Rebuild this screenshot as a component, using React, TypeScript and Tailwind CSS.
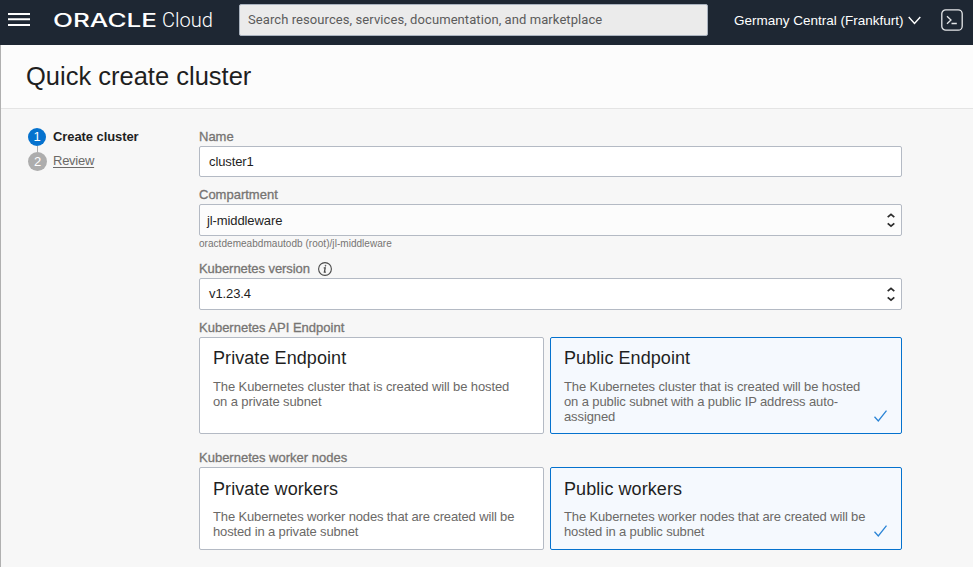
import type { ReactNode } from "react";

function FieldLabel({ children, className = "" }: { children: ReactNode; className?: string }) {
  return (
    <div
      className={`flex items-center text-[13px] leading-[18px] text-[#767472] [-webkit-text-stroke:0.3px_#767472] ${className}`}
    >
      {children}
    </div>
  );
}

function Stepper() {
  return (
    <svg className="h-[17px] w-[8px] shrink-0" viewBox="0 0 8 17" fill="none" stroke="#2b2b2b" strokeWidth="1.7">
      <path d="M0.7 5.2 4 2.3l3.3 2.9M0.7 11.3 4 14.2l3.3-2.9" />
    </svg>
  );
}

interface ChoiceProps {
  title: string;
  lines: string[];
  selected?: boolean;
  compact?: boolean;
}

function Choice({ title, lines, selected = false, compact = false }: ChoiceProps) {
  return (
    <div
      className={`flex rounded-[2px] border pl-[13px] ${compact ? "pt-[9px]" : "pt-[8px]"} ${
        selected ? "border-[#0572ce] bg-[#f5f9fe]" : "border-[#b4bac4] bg-white"
      }`}
    >
      <div className="grow">
        <h3 className="text-[18px] leading-6 tracking-[0.07px] text-[#1f1f1f]">{title}</h3>
        <p
          className={`text-[13px] leading-[15px] whitespace-nowrap text-[#6b6967] ${
            compact ? "mt-[8px] tracking-[-0.14px]" : "mt-[9px] tracking-[-0.11px]"
          }`}
        >
          {lines.map((line) => (
            <span key={line} className="block">
              {line}
            </span>
          ))}
        </p>
      </div>
      {selected && (
        <svg
          className={`mr-[14px] h-3 w-[13px] shrink-0 self-end ${compact ? "mb-[12px]" : "mb-[11px]"}`}
          viewBox="0 0 13 12"
          fill="none"
          stroke="#2a84d6"
          strokeWidth="1.3"
        >
          <path d="M0.5 6.8 4.3 10.9 12.5 0.7" />
        </svg>
      )}
    </div>
  );
}

export default function App() {
  return (
    <div className="flex h-[567px] w-[973px] flex-col overflow-hidden bg-[#f7f7f7] font-['Liberation_Sans',Arial,sans-serif]">
      <header className="flex h-[45px] shrink-0 bg-[#1e2733] text-white">
        <svg className="mt-3 ml-2 h-[15px] w-[22px]" viewBox="0 0 22 15" fill="#fff">
          <path d="M0 1h22v2H0zM0 6.2h22v2H0zM0 11.9h22v2H0z" />
        </svg>
        <svg className="ml-[23px] h-[45px] w-[162px]" viewBox="0 0 162 45" fill="#fff">
          <text x="0" y="27" fontSize="18" fontFamily="Inter, sans-serif" fontWeight="500" textLength="104" lengthAdjust="spacingAndGlyphs">
            ORACLE
          </text>
          <text x="109" y="27" fontSize="19.5" fontFamily="Roboto, sans-serif" fontWeight="300" textLength="51" lengthAdjust="spacingAndGlyphs">
            Cloud
          </text>
        </svg>
        <div className="mt-1 ml-6 flex h-8 w-[469px] items-center rounded-[2px] border border-[#aab3bf] bg-[#ebebeb] pl-[8px] font-['Roboto',sans-serif] text-[13px] tracking-[0.08px] text-[#5b5b5b]">
          Search resources, services, documentation, and marketplace
        </div>
        <div className="mt-[12px] ml-[26px] h-[18px] w-[171px] text-[13.5px] leading-[18px] whitespace-nowrap">
          Germany Central (Frankfurt)
        </div>
        <svg className="mt-[15px] ml-[3px] h-[11px] w-[13px]" viewBox="0 0 13 11" fill="none" stroke="#fff" strokeWidth="1.4">
          <path d="M0.7 2 6.5 8.5 12.3 2" />
        </svg>
        <svg className="mt-[9px] ml-[20px] h-[22px] w-[22px]" viewBox="0 0 22 22" fill="none" stroke="#e6e8ea" strokeWidth="1.3">
          <rect x="0.8" y="0.8" width="20.4" height="20.4" rx="4" />
          <path d="M6 7.2 10 11 6 14.8M10.5 14.5h5.3" />
        </svg>
      </header>

      <div className="flex grow flex-col border-l border-[#b0b0b0]">
        <div className="flex h-16 shrink-0 items-center border-b border-[#e4e4e4] bg-[#fcfcfc] pb-[2px] pl-[25px]">
          <h1 className="text-[25.5px] leading-8 text-[#1f1f1f]">Quick create cluster</h1>
        </div>

        <div className="flex grow">
          <nav className="w-[198px] shrink-0 pt-[19px] pl-[27px] text-[13px]">
            <div className="flex h-[18px] items-center">
              <span className="flex size-[18px] items-center justify-center rounded-full bg-[#0572ce] text-white">1</span>
              <span className="ml-[7px] font-bold tracking-[-0.08px] text-[#1f1f1f]">Create cluster</span>
            </div>
            <div className="ml-[9px] h-[6px] w-px bg-[#adadad]" />
            <div className="flex h-[19px] items-center">
              <span className="flex size-[19px] items-center justify-center rounded-full bg-[#adadad] text-white">2</span>
              <span className="mb-px ml-[6px] tracking-[-0.25px] text-[#6b6967] underline underline-offset-2">Review</span>
            </div>
          </nav>

          <main className="flex w-[703px] flex-col">
            <FieldLabel className="mt-[19px]">Name</FieldLabel>
            <div className="flex h-[31px] items-center rounded-[2px] border border-[#b4bac4] bg-white pl-[9px] text-[13px] tracking-[-0.1px] text-[#1f1f1f]">
              cluster1
            </div>

            <FieldLabel className="mt-[9px]">Compartment</FieldLabel>
            <div className="flex h-8 items-center justify-between rounded-[2px] border border-[#b4bac4] bg-[#fcfcfc] pr-[6px] pl-[7px] text-[13px] tracking-[-0.1px] text-[#1f1f1f]">
              <span className="mt-[2px]">jl-middleware</span>
              <Stepper />
            </div>
            <div className="mt-[2px] h-3 text-[10px] leading-3 tracking-[0.04px] text-[#767472]">
              oractdemeabdmautodb (root)/jl-middleware
            </div>

            <FieldLabel className="mt-[10px]">
              <span className="tracking-[-0.06px]">Kubernetes version</span>
              <svg className="ml-[8px] size-[14px] overflow-visible" viewBox="0 0 14 14" fill="none" stroke="#4a4a4a" strokeWidth="1.1">
                <circle cx="7" cy="7" r="6.4" />
                <path d="M5.7 5.8h1.5L6.4 10.1h1.5" strokeWidth="1.3" />
                <circle cx="7.5" cy="3.7" r="0.5" fill="#4a4a4a" strokeWidth="0.6" />
              </svg>
            </FieldLabel>
            <div className="flex h-8 items-center justify-between rounded-[2px] border border-[#b4bac4] bg-white pr-[6px] pl-[9px] text-[13px] tracking-[-0.1px] text-[#1f1f1f]">
              v1.23.4
              <Stepper />
            </div>

            <FieldLabel className="mt-[9px]">Kubernetes API Endpoint</FieldLabel>
            <div className="grid h-[97px] grid-cols-[345px_352px] gap-[6px]">
              <Choice
                title="Private Endpoint"
                lines={["The Kubernetes cluster that is created will be hosted", "on a private subnet"]}
              />
              <Choice
                selected
                title="Public Endpoint"
                lines={[
                  "The Kubernetes cluster that is created will be hosted",
                  "on a public subnet with a public IP address auto-",
                  "assigned",
                ]}
              />
            </div>

            <FieldLabel className="mt-[15px]">Kubernetes worker nodes</FieldLabel>
            <div className="grid h-[83px] grid-cols-[345px_352px] gap-[6px]">
              <Choice
                compact
                title="Private workers"
                lines={["The Kubernetes worker nodes that are created will be", "hosted in a private subnet"]}
              />
              <Choice
                compact
                selected
                title="Public workers"
                lines={["The Kubernetes worker nodes that are created will be", "hosted in a public subnet"]}
              />
            </div>
          </main>
        </div>
      </div>
    </div>
  );
}
